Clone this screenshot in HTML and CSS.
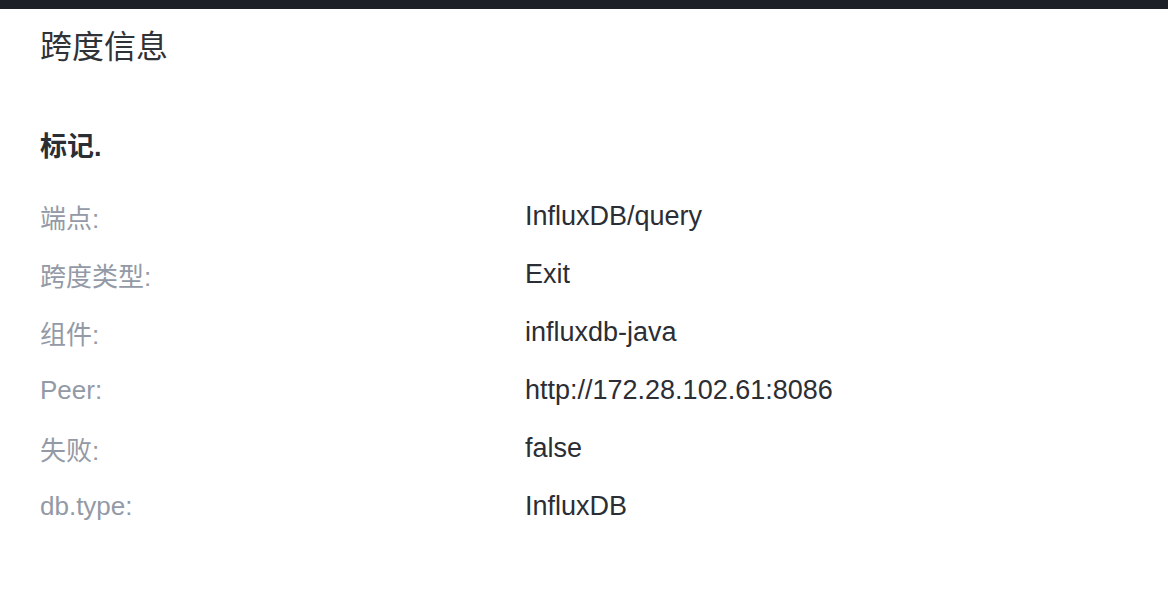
FILE: index.html
```html
<!DOCTYPE html>
<html lang="zh">
<head>
<meta charset="utf-8">
<title>跨度信息</title>
<link rel="stylesheet" href="styles.css">
</head>
<body>
<div class="topbar"></div>
<main class="content">
  <h1 class="title">跨度信息</h1>
  <h2 class="section">标记.</h2>
  <div class="rows">
    <div class="label">端点:</div><div class="value">InfluxDB/query</div>
    <div class="label">跨度类型:</div><div class="value">Exit</div>
    <div class="label">组件:</div><div class="value">influxdb-java</div>
    <div class="label">Peer:</div><div class="value">http://172.28.102.61:8086</div>
    <div class="label">失败:</div><div class="value">false</div>
    <div class="label">db.type:</div><div class="value">InfluxDB</div>
  </div>
</main>
</body>
</html>
```
FILE: styles.css
```css
html, body {
  margin: 0;
  padding: 0;
  background: #ffffff;
}
body {
  font-family: "Liberation Sans", "Noto Sans CJK SC", sans-serif;
  width: 1168px;
  height: 598px;
  overflow: hidden;
}
.topbar {
  height: 9px;
  background: #1d2027;
}
.content {
  padding: 14px 40px 0 40px;
}
.title {
  margin: 0;
  font-size: 32px;
  line-height: 48px;
  font-weight: 400;
  color: #2f3237;
}
.section {
  margin: 56px 0 20px 0;
  font-size: 27px;
  line-height: 40px;
  font-weight: 700;
  color: #2b2e33;
}
.rows {
  display: grid;
  grid-template-columns: 485px 1fr;
  grid-auto-rows: 58px;
  align-items: center;
}
.label {
  font-size: 26px;
  color: #939aa6;
}
.value {
  font-size: 27px;
  color: #2b2e34;
}
```
